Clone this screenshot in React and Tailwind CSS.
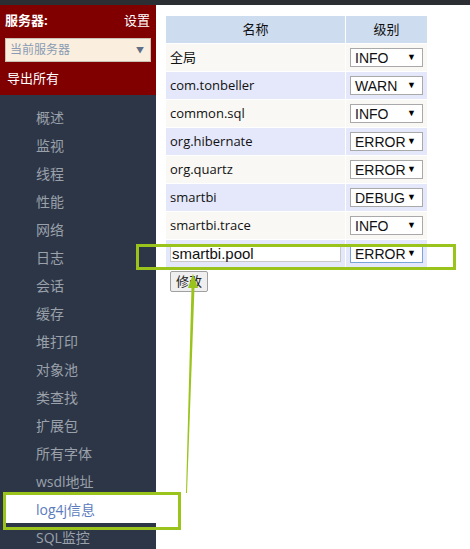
import React from 'react';

const navItems = ['概述', '监视', '线程', '性能', '网络', '日志', '会话', '缓存', '堆打印', '对象池', '类查找', '扩展包', '所有字体', 'wsdl地址', 'log4j信息', 'SQL监控'];

const loggers = [
    { name: '全局', level: 'INFO' },
    { name: 'com.tonbeller', level: 'WARN' },
    { name: 'common.sql', level: 'INFO' },
    { name: 'org.hibernate', level: 'ERROR' },
    { name: 'org.quartz', level: 'ERROR' },
    { name: 'smartbi', level: 'DEBUG' },
    { name: 'smartbi.trace', level: 'INFO' },
];

const cjk = { fontFamily: '"Open Sans", "Noto Sans CJK SC", sans-serif' };

// fake select box, drawn as a div so it renders the same everywhere
const LevelSelect = ({ value, focused }) => (
    <div
        className={
            'w-[73px] h-[19px] bg-white flex items-center justify-between pl-[4px] pr-[6px] text-[14px] leading-none text-[#111] font-["Liberation_Sans",sans-serif] ' +
            (focused ? 'border border-[#7aa3d8]' : 'border border-[#a9a9a9]')
        }
    >
        <span>{value}</span>
        <span className="text-[9px] text-black">▼</span>
    </div>
);

export default function App() {
    return (
        <div className="relative w-[470px] h-[549px] overflow-hidden bg-white flex flex-col" style={cjk}>
            {/* top strip */}
            <div className="h-[5px] bg-[#2b2e33] shrink-0" />

            <div className="flex flex-1 min-h-0">
                {/* Sidebar */}
                <div className="w-[156px] shrink-0 bg-[#2d3647] flex flex-col">
                    <div className="bg-[#800000] h-[90px] shrink-0 px-[5px] flex flex-col">
                        <div className="flex justify-between items-center h-[30px] pt-[2px]">
                            <span className="text-white font-bold text-[13px]">服务器:</span>
                            <span className="text-white text-[13px] pr-[1px]">设置</span>
                        </div>
                        <div className="h-[24px] mt-[3px] bg-[#faefdf] border border-[#c9bfb2] flex items-center justify-between pl-[4px] pr-[6px]">
                            <span className="text-[12px] text-[#8a9bb3]">当前服务器</span>
                            <span className="text-[8px] text-[#5f6f86]">▼</span>
                        </div>
                        <div className="text-white text-[13px] mt-[7px] pl-[2px]">导出所有</div>
                    </div>

                    <div className="pt-[8px] flex flex-col">
                        {navItems.map((item) => (
                            <div
                                key={item}
                                className={
                                    'h-[28px] shrink-0 flex items-center text-[14px] ' +
                                    (item === 'log4j信息'
                                        ? 'bg-white text-[#5b7bbd] ml-[5px] pl-[31px]'
                                        : 'text-[#9aa1aa] pl-[36px]')
                                }
                            >
                                {item}
                            </div>
                        ))}
                    </div>
                </div>

                {/* Main */}
                <div className="flex-1 pl-[10px] pt-[11px]">
                    <div className="w-[261px] grid grid-cols-[179px_81px] gap-px text-[13px] text-[#111]">
                        <div className="h-[27px] bg-[#cddcef] flex items-center justify-center">名称</div>
                        <div className="h-[27px] bg-[#cddcef] flex items-center justify-center">级别</div>

                        {loggers.map((row, i) => (
                            <React.Fragment key={row.name}>
                                <div className={'h-[27px] flex items-center pl-[4px] ' + (i % 2 === 0 ? 'bg-[#f9f8f4]' : 'bg-[#e5e8fa]')}>
                                    {row.name}
                                </div>
                                <div className={'h-[27px] flex items-center pl-[4px] ' + (i % 2 === 0 ? 'bg-[#f9f8f4]' : 'bg-[#e5e8fa]')}>
                                    <LevelSelect value={row.level} />
                                </div>
                            </React.Fragment>
                        ))}

                        {/* editable row */}
                        <div className="h-[27px] flex items-center pl-[4px] pr-[4px] bg-[#e5e8fa]">
                            <div className="w-full h-[16px] bg-white border border-[#c8c8c8] flex items-center pl-[1px] text-[15px] leading-none font-['Liberation_Sans',sans-serif]">
                                smartbi.pool
                            </div>
                        </div>
                        <div className="h-[27px] flex items-center pl-[4px] bg-[#e5e8fa]">
                            <LevelSelect value="ERROR" focused />
                        </div>
                    </div>

                    <button className="mt-[4px] ml-[4px] h-[21px] px-[5px] bg-[#efefef] border border-[#a0a0a0] rounded-[2px] text-[13px] text-[#222] leading-none">
                        修改
                    </button>
                </div>
            </div>

            {/* annotation overlays */}
            <div className="absolute left-[3px] top-[492px] w-[178px] h-[38px] border-[3px] border-[#9ac41c]" />
            <div className="absolute left-[136px] top-[244px] w-[320px] h-[26px] border-[3px] border-[#9ac41c]" />
            <svg className="absolute left-0 top-0" width="470" height="549">
                <polygon points="193,274 188,288 198,288" fill="#9ac41c" />
                <polygon points="191.5,287 194.5,287 187,493 186,493" fill="#9ac41c" />
            </svg>
        </div>
    );
}
